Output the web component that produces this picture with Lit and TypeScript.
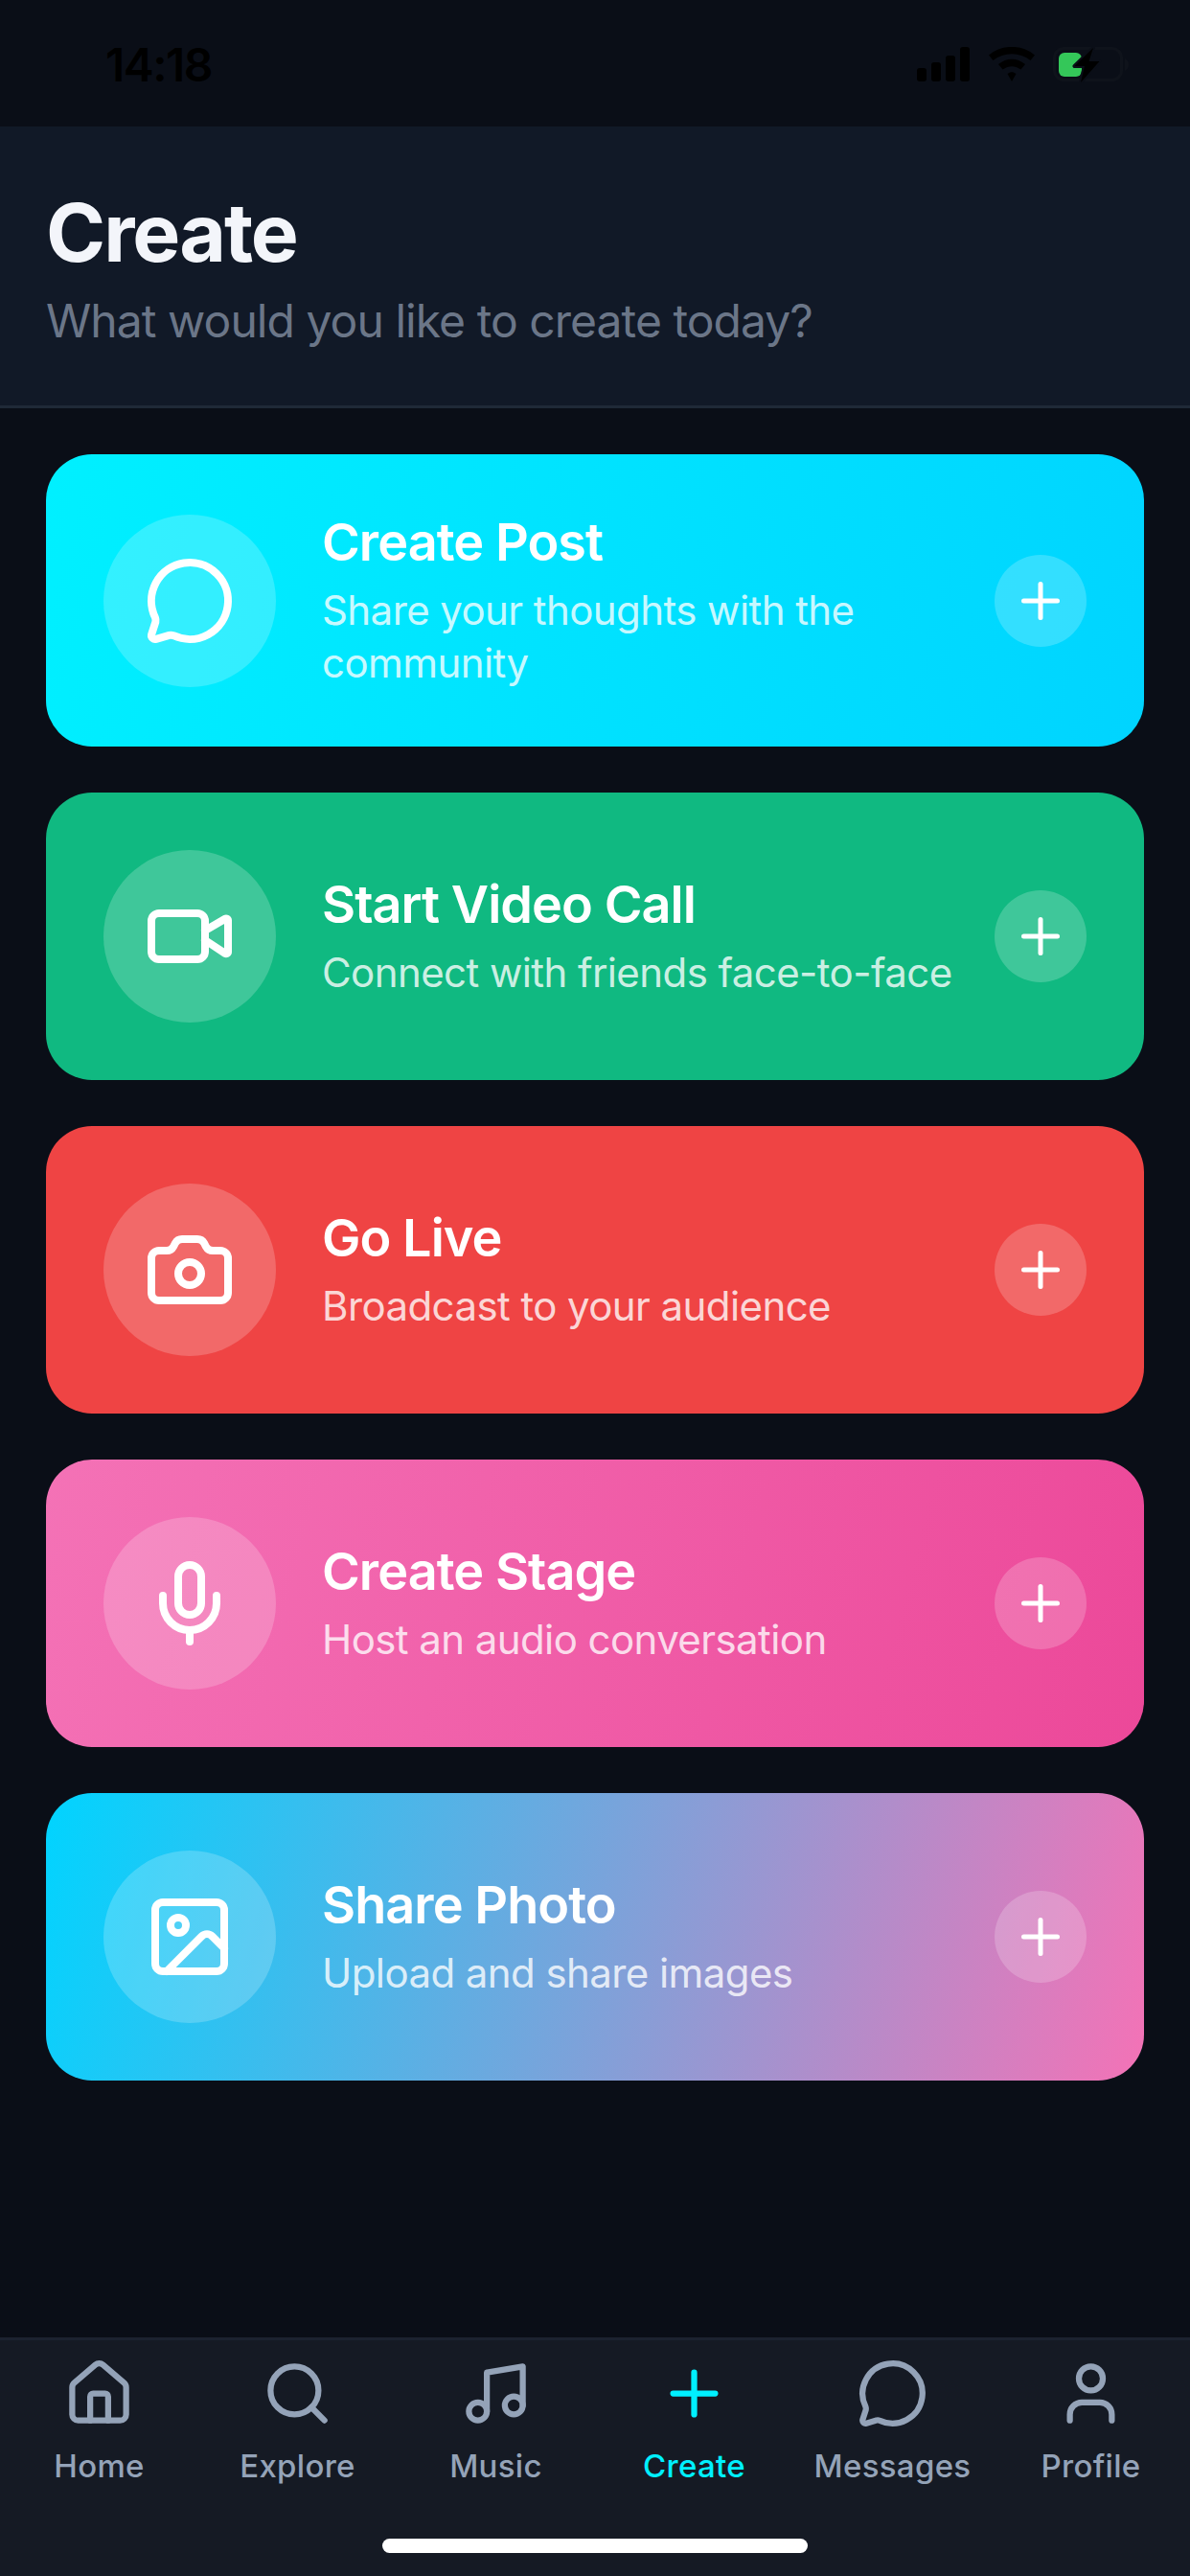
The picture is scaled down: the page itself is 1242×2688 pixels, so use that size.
import { LitElement, html, css, svg } from "lit";
import { customElement } from "lit/decorators.js";

const ic = {
  msg: svg`<path d="M2.992 16.342a2 2 0 0 1 .094 1.167l-1.065 3.29a1 1 0 0 0 1.236 1.168l3.413-.998a2 2 0 0 1 1.099.092 10 10 0 1 0-4.777-4.719"/>`,
  video: svg`<path d="m16 13 5.223 3.482a.5.5 0 0 0 .777-.416V7.87a.5.5 0 0 0-.752-.432L16 10.5"/><rect x="2" y="6" width="14" height="12" rx="2"/>`,
  camera: svg`<path d="M13.997 4a2 2 0 0 1 1.76 1.05l.486.9A2 2 0 0 0 18.003 7H20a2 2 0 0 1 2 2v9a2 2 0 0 1-2 2H4a2 2 0 0 1-2-2V9a2 2 0 0 1 2-2h1.997a2 2 0 0 0 1.759-1.048l.489-.904A2 2 0 0 1 10.004 4z"/><circle cx="12" cy="13" r="3"/>`,
  mic: svg`<path d="M12 19v3"/><path d="M19 10v2a7 7 0 0 1-14 0v-2"/><rect x="9" y="2" width="6" height="13" rx="3"/>`,
  image: svg`<rect x="3" y="3" width="18" height="18" rx="2"/><circle cx="9" cy="9" r="2"/><path d="m21 15-3.086-3.086a2 2 0 0 0-2.828 0L6 21"/>`,
  plus: svg`<path d="M5 12h14"/><path d="M12 5v14"/>`,
  home: svg`<path d="M15 21v-8a1 1 0 0 0-1-1h-4a1 1 0 0 0-1 1v8"/><path d="M3 10a2 2 0 0 1 .709-1.528l7-6a2 2 0 0 1 2.582 0l7 6A2 2 0 0 1 21 10v9a2 2 0 0 1-2 2H5a2 2 0 0 1-2-2z"/>`,
  search: svg`<path d="m21 21-4.34-4.34"/><circle cx="11" cy="11" r="8"/>`,
  music: svg`<path d="M9 18V5l12-2v13"/><circle cx="6" cy="18" r="3"/><circle cx="18" cy="16" r="3"/>`,
  user: svg`<path d="M19 21v-2a4 4 0 0 0-4-4H9a4 4 0 0 0-4 4v2"/><circle cx="12" cy="7" r="4"/>`,
};

const icon = (body: unknown) => html`<svg viewBox="0 0 24 24" fill="none" stroke="currentColor" stroke-width="2" stroke-linecap="round" stroke-linejoin="round">${body}</svg>`;

const cards = [
  { cls: "cyan", icon: ic.msg, title: "Create Post", sub: "Share your thoughts with the community" },
  { cls: "green", icon: ic.video, title: "Start Video Call", sub: "Connect with friends face-to-face" },
  { cls: "red", icon: ic.camera, title: "Go Live", sub: "Broadcast to your audience" },
  { cls: "pink", icon: ic.mic, title: "Create Stage", sub: "Host an audio conversation" },
  { cls: "blend", icon: ic.image, title: "Share Photo", sub: "Upload and share images" },
];

const tabs = [
  { label: "Home", icon: ic.home },
  { label: "Explore", icon: ic.search },
  { label: "Music", icon: ic.music },
  { label: "Create", icon: ic.plus, active: true },
  { label: "Messages", icon: ic.msg },
  { label: "Profile", icon: ic.user },
];

@customElement("app-root")
export class AppRoot extends LitElement {
  static styles = css`
    :host {
      display: flex;
      flex-direction: column;
      width: 1242px;
      height: 2688px;
      background: #0a0e17;
      font-family: Inter, "Noto Sans", sans-serif;
      overflow: hidden;
    }
    .status {
      height: 132px;
      flex: none;
      box-sizing: border-box;
      padding: 49px 64px 0 110px;
      display: flex;
      justify-content: space-between;
      align-items: flex-start;
    }
    .time {
      font-size: 48px;
      font-weight: 600;
      line-height: 37px;
      color: #000;
      letter-spacing: -1.5px;
    }
    .sys { display: block; }
    .header {
      flex: none;
      height: 294px;
      box-sizing: border-box;
      padding: 60px 48px 0;
      background: #111927;
      border-bottom: 3px solid #1f2937;
    }
    h1 {
      margin: 0;
      font-size: 84px;
      line-height: 102px;
      font-weight: 700;
      letter-spacing: -2px;
      color: #f3f5fa;
    }
    .lead {
      margin: 12px 0 0;
      font-size: 48px;
      line-height: 57px;
      letter-spacing: -0.95px;
      color: #6b7688;
    }
    main {
      flex: 1;
      padding: 48px 48px 0;
      display: flex;
      flex-direction: column;
      gap: 48px;
    }
    .card {
      display: flex;
      align-items: center;
      padding: 60px;
      border-radius: 48px;
      color: #fff;
    }
    .cyan { background: linear-gradient(104.8deg, #00f0ff, #00d4ff); }
    .green { background: #10b981; }
    .red { background: #ef4444; }
    .pink { background: linear-gradient(104.7deg, #f472b6, #ec4899); }
    .blend { background: linear-gradient(104.7deg, #00d4ff, #f472b6); }
    .disc {
      flex: none;
      width: 180px;
      height: 180px;
      border-radius: 50%;
      background: rgba(255, 255, 255, 0.2);
      display: flex;
      align-items: center;
      justify-content: center;
      margin-right: 48px;
    }
    .disc svg { width: 96px; height: 96px; }
    .copy { flex: 1; min-width: 0; }
    .title {
      font-size: 54px;
      line-height: 64px;
      font-weight: 600;
      letter-spacing: -0.95px;
    }
    .sub {
      margin-top: 12px;
      font-size: 42px;
      line-height: 54.5px;
      letter-spacing: -0.58px;
      color: rgba(255, 255, 255, 0.8);
    }
    .add {
      flex: none;
      width: 96px;
      height: 96px;
      margin-left: 24px;
      border-radius: 50%;
      background: rgba(255, 255, 255, 0.2);
      display: flex;
      align-items: center;
      justify-content: center;
    }
    .add svg { width: 60px; height: 60px; }
    nav {
      flex: none;
      height: 249px;
      box-sizing: border-box;
      border-top: 3px solid #1c2230;
      background: #151a24;
      padding-top: 18px;
      display: flex;
      position: relative;
    }
    .tab {
      flex: 1;
      display: flex;
      flex-direction: column;
      align-items: center;
      color: #94a3b8;
      font-size: 33px;
      line-height: 40px;
      font-weight: 500;
      letter-spacing: 0.3px;
    }
    .tab svg { width: 75px; height: 75px; margin-bottom: 18px; }
    .tab.active { color: #00f0ff; }
    .bar {
      position: absolute;
      left: 399px;
      bottom: 24px;
      width: 444px;
      height: 15px;
      border-radius: 8px;
      background: #fff;
    }
  `;

  render() {
    return html`
      <div class="status">
        <span class="time">14:18</span>
        <svg class="sys" width="226" height="38" viewBox="0 0 226 38">
          <rect x="5" y="22" width="10" height="14" rx="3" fill="#000"/>
          <rect x="20" y="16" width="10" height="20" rx="3" fill="#000"/>
          <rect x="35" y="9" width="10" height="27" rx="3" fill="#000"/>
          <rect x="50" y="0" width="10" height="36" rx="3" fill="#000"/>
          <path d="M80 8.5C94 -3 114 -3 128 8.5L123.5 14C112 5 96 5 84.500 14Z" fill="#000"/>
          <path d="M90 18C99 11 109 11 118 18L113.500 23.500C107 19 101 19 94.500 23.500Z" fill="#000"/>
          <path d="M99.500 28C103 25.500 105 25.500 108.500 28L104 36Z" fill="#000"/>
          <rect x="148.500" y="1.500" width="70" height="33" rx="10" fill="none" stroke="#0f131b" stroke-width="3"/>
          <path d="M222 12C224.500 13 226 15.500 226 18.500C226 21.500 224.500 24 222 25Z" fill="#0f131b"/>
          <rect x="153" y="6" width="24" height="25" rx="6" fill="#34c759"/>
          <path d="M189 1L169.500 20H180L176 37L195.500 15H184.500Z" fill="#000" stroke="#0a0e17" stroke-width="4" paint-order="stroke" stroke-linejoin="round"/>
        </svg>
      </div>
      <header class="header">
        <h1>Create</h1>
        <p class="lead">What would you like to create today?</p>
      </header>
      <main>
        ${cards.map(
          (c) => html`<div class="card ${c.cls}">
            <div class="disc">${icon(c.icon)}</div>
            <div class="copy">
              <div class="title">${c.title}</div>
              <div class="sub">${c.sub}</div>
            </div>
            <div class="add">${icon(ic.plus)}</div>
          </div>`
        )}
      </main>
      <nav>
        ${tabs.map(
          (t) => html`<div class="tab ${t.active ? "active" : ""}">${icon(t.icon)}<span>${t.label}</span></div>`
        )}
        <div class="bar"></div>
      </nav>
    `;
  }
}
